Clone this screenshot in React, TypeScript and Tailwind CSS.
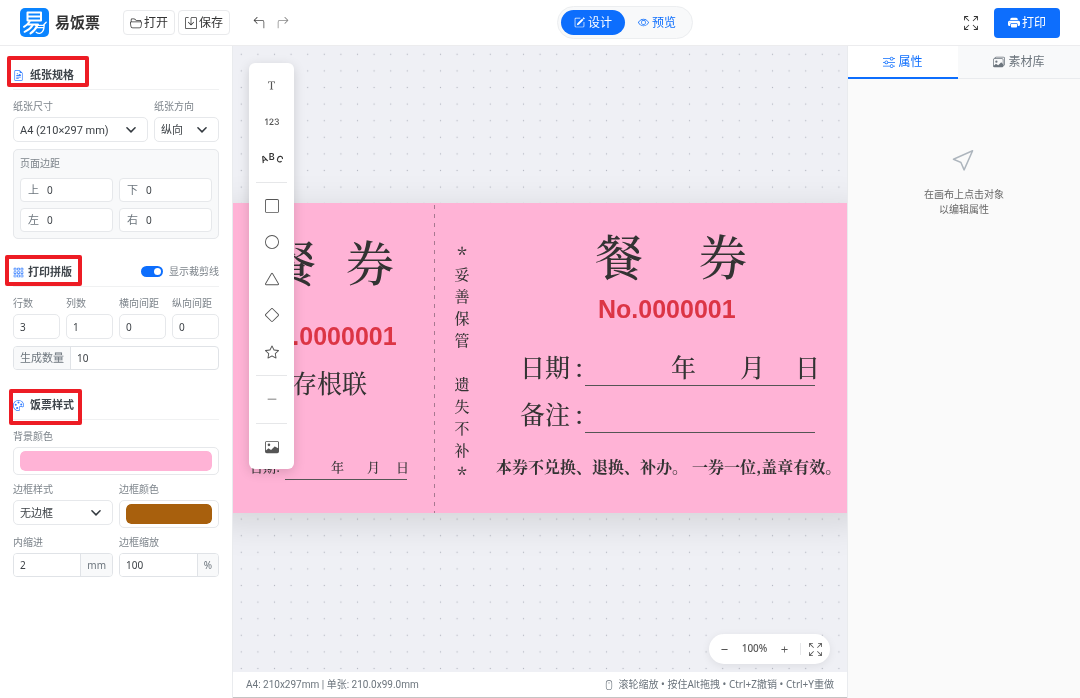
import type { ReactNode } from 'react';
import {
  Bs123,
  BsArrow90DegLeft,
  BsArrow90DegRight,
  BsArrowsFullscreen,
  BsCircle,
  BsCursor,
  BsDash,
  BsDashLg,
  BsDiamond,
  BsEye,
  BsFileEarmarkRichtext,
  BsFolder2Open,
  BsFonts,
  BsGrid3X3Gap,
  BsImage,
  BsImages,
  BsMouse,
  BsPalette,
  BsPencilSquare,
  BsPlus,
  BsPrinterFill,
  BsSave,
  BsSliders,
  BsSquare,
  BsStar,
  BsTriangle,
} from 'react-icons/bs';

const box = 'block w-full min-w-0 rounded-[5px] border border-[#e6e8eb] bg-white px-[6px] text-[#3c4146] outline-none';

function Logo() {
  return (
    <svg viewBox="0 0 29 29" className="size-[29px]" role="img" aria-label="易饭票">
      <rect width="29" height="29" rx="5" fill="#0a84ff" />
      <g fill="none" stroke="#fff" strokeWidth="2" strokeLinecap="round" strokeLinejoin="round">
        <path d="M7.500 4.500h13.500v8h-13.500zM7.500 8.500h13.500" />
        <path d="M9.600 13.400C8 16 6 17.600 4 18.800M8 16.400h10" />
        <path d="M12.800 17c-1.800 3-4.800 5.400-8.200 6.800M17.500 17c-1.400 3.400-4 6.400-7 8.400" />
      </g>
      <g fill="none" stroke="#fff" strokeWidth="1.300" strokeLinecap="round" strokeLinejoin="round">
        <path d="M15.500 17.300h8.700c-.1 4.400-1.500 7.500-4.400 8-1.400.2-2.600-.3-3.600-1.100M16 19.600h8M23.800 16.800l2.400-2.600" />
      </g>
    </svg>
  );
}

function ArcText() {
  return (
    <svg viewBox="0 0 26 18" className="h-[18px] w-[26px] overflow-visible" aria-hidden="true">
      <g fill="#333" fontFamily="Inter, sans-serif" fontSize="9" fontWeight="600" textAnchor="middle">
        <text transform="translate(6.500 13) rotate(-24)">A</text>
        <text transform="translate(12.800 11)">B</text>
        <text transform="translate(19.500 13) rotate(24)">C</text>
      </g>
    </svg>
  );
}

function Label({ htmlFor, children }: { htmlFor: string; children: ReactNode }) {
  return (
    <label htmlFor={htmlFor} className="mb-1 block h-[14px] text-[10px] leading-[14px] whitespace-nowrap text-[#7d848b]">
      {children}
    </label>
  );
}

function Field({ id, label, value }: { id: string; label: string; value: string }) {
  return (
    <div>
      <Label htmlFor={id}>{label}</Label>
      <input id={id} defaultValue={value} className={`${box} h-[25px] text-[10px]`} />
    </div>
  );
}

function Select({ id, label, value }: { id: string; label: string; value: string }) {
  return (
    <div>
      <Label htmlFor={id}>{label}</Label>
      <div className="relative">
        <select id={id} className={`${box} h-[25px] appearance-none pt-[3px] text-[11px] font-[Roboto,Noto_Sans_CJK_SC,sans-serif]`}>
          <option>{value}</option>
        </select>
        <svg
          viewBox="0 0 16 16"
          className="pointer-events-none absolute top-2 right-3 size-[10px]"
          fill="none"
          stroke="#343a40"
          strokeWidth="2.400"
          strokeLinecap="round"
          strokeLinejoin="round"
        >
          <path d="m1.500 4.500 6.500 6.500 6.500-6.500" />
        </svg>
      </div>
    </div>
  );
}

function Color({ id, label, swatch }: { id: string; label: string; swatch: string }) {
  return (
    <div>
      <Label htmlFor={id}>{label}</Label>
      <div className="h-7 rounded-[5px] border border-[#e6e8eb] px-[6px] py-[3px]">
        <input
          id={id}
          type="color"
          defaultValue={swatch}
          className="block h-5 w-full appearance-none rounded-[5px] bg-transparent p-0 [&::-webkit-color-swatch]:rounded-[5px] [&::-webkit-color-swatch]:border-0 [&::-webkit-color-swatch-wrapper]:p-0"
        />
      </div>
    </div>
  );
}

function Margin({ id, label }: { id: string; label: string }) {
  return (
    <div className="flex h-6 items-center rounded border border-[#e6e8eb] bg-white pl-[7px]">
      <label htmlFor={id} className="text-[11px] text-[#6c757d]">
        {label}
      </label>
      <input id={id} defaultValue="0" className="ml-2 w-full min-w-0 bg-transparent text-[10px] text-[#3c4146] outline-none" />
    </div>
  );
}

function UnitField({ id, label, value, unit }: { id: string; label: string; value: string; unit: string }) {
  return (
    <div>
      <Label htmlFor={id}>{label}</Label>
      <div className="flex h-6 overflow-hidden rounded border border-[#e0e3e7]">
        <input id={id} defaultValue={value} className="w-full min-w-0 bg-white px-[6px] text-[10px] text-[#3c4146] outline-none" />
        <span className="flex items-center border-l border-[#e0e3e7] bg-[#f8f9fa] px-[6px] text-[10px] text-[#6c757d]">{unit}</span>
      </div>
    </div>
  );
}

function Heading({ icon, mark, gap, children, extra }: { icon: ReactNode; mark: string; gap: string; children: ReactNode; extra?: ReactNode }) {
  return (
    <div className="relative mb-[9px] flex h-7 items-center justify-between border-b border-[#f0f1f2]">
      <h2 className={`flex items-center text-[11px] font-bold text-[#3f454b] ${gap}`}>
        <span className="text-[11px] text-[#2f7bff]">{icon}</span>
        {children}
      </h2>
      {extra}
      <span className={`pointer-events-none absolute rounded-[2px] border-4 border-[#ed1c24] ${mark}`} />
    </div>
  );
}

function Sidebar() {
  return (
    <aside className="w-[233px] shrink-0 border-r border-[#e9ebee] bg-white px-[13px] pt-4">
      <section>
        <Heading icon={<BsFileEarmarkRichtext />} gap="gap-[6px]" mark="-top-[6px] -left-[6px] h-[31px] w-[82px]">
          纸张规格
        </Heading>
        <div className="grid grid-cols-[135fr_65fr] gap-[6px]">
          <Select id="size" label="纸张尺寸" value="A4 (210×297 mm)" />
          <Select id="direction" label="纸张方向" value="纵向" />
        </div>
        <fieldset className="mt-[7px] rounded-[5px] border border-[#e6e8eb] bg-[#f8f9fa] p-[6px]">
          <legend className="float-left mb-2 h-[14px] w-full text-[10px] leading-[14px] text-[#7d848b]">页面边距</legend>
          <div className="clear-both grid grid-cols-2 gap-[6px]">
            <Margin id="top" label="上" />
            <Margin id="bottom" label="下" />
            <Margin id="left" label="左" />
            <Margin id="right" label="右" />
          </div>
        </fieldset>
      </section>

      <section className="mt-5">
        <Heading
          icon={<BsGrid3X3Gap />}
          gap="gap-1"
          mark="-top-1 -left-2 h-[31px] w-[77px]"
          extra={
            <label className="flex items-center gap-[6px] pb-[2px] text-[10px] text-[#7d848b]">
              <input
                type="checkbox"
                role="switch"
                defaultChecked
                className="h-[11px] w-[22px] appearance-none rounded-full bg-[#adb5bd] p-[2px] before:block before:size-[7px] before:rounded-full before:bg-white checked:bg-[#0d6efd] checked:before:ml-auto"
              />
              显示裁剪线
            </label>
          }
        >
          打印拼版
        </Heading>
        <div className="grid grid-cols-4 gap-[6px]">
          <Field id="rows" label="行数" value="3" />
          <Field id="cols" label="列数" value="1" />
          <Field id="gapx" label="横向间距" value="0" />
          <Field id="gapy" label="纵向间距" value="0" />
        </div>
        <div className="mt-[7px] flex h-6 overflow-hidden rounded border border-[#e0e3e7]">
          <label htmlFor="count" className="flex shrink-0 items-center border-r border-[#e0e3e7] bg-[#f8f9fa] px-[6px] text-[11px] text-[#6c757d]">
            生成数量
          </label>
          <input id="count" defaultValue="10" className="w-full min-w-0 px-[6px] text-[10px] text-[#3c4146] outline-none" />
        </div>
      </section>

      <section className="mt-[22px]">
        <Heading icon={<BsPalette />} gap="gap-[6px]" mark="-top-[3px] -left-1 h-9 w-[73px]">
          饭票样式
        </Heading>
        <Color id="background" label="背景颜色" swatch="#ffb3d6" />
        <div className="mt-[7px] grid grid-cols-2 gap-x-[6px] gap-y-[7px]">
          <Select id="borderStyle" label="边框样式" value="无边框" />
          <Color id="borderColor" label="边框颜色" swatch="#a8600d" />
          <UnitField id="inset" label="内缩进" value="2" unit="mm" />
          <UnitField id="scale" label="边框缩放" value="100" unit="%" />
        </div>
      </section>
    </aside>
  );
}

function Header() {
  return (
    <header className="flex h-[46px] shrink-0 items-center justify-between border-b border-[#ececee] bg-white px-5">
      <div className="flex items-center">
        <Logo />
        <h1 className="ml-[6px] text-[15px] font-bold text-[#333]">易饭票</h1>
        <button className="ml-[23px] flex h-[25px] items-center gap-[2px] rounded border border-[#e9eaec] px-[6px] text-[12px] text-[#333]">
          <BsFolder2Open className="size-3" />
          打开
        </button>
        <button className="ml-[3px] flex h-[25px] items-center gap-[2px] rounded border border-[#e9eaec] px-[6px] text-[12px] text-[#333]">
          <BsSave className="size-3" />
          保存
        </button>
        <button aria-label="撤销" className="ml-[22px] p-px text-[#444]">
          <BsArrow90DegLeft className="size-3" />
        </button>
        <button aria-label="重做" className="ml-[10px] p-px text-[#888]">
          <BsArrow90DegRight className="size-3" />
        </button>
      </div>

      <nav className="mr-1 flex items-center rounded-full border border-[#eceef0] bg-[#f8f9fa] p-[3px] text-[12px]">
        <button className="flex h-[25px] items-center gap-[3px] rounded-full bg-[#0d6efd] px-[13px] text-white">
          <BsPencilSquare className="size-[11px]" />
          设计
        </button>
        <button className="flex h-[25px] items-center gap-[3px] rounded-full px-[13px] text-[#0d6efd]">
          <BsEye className="size-[11px]" />
          预览
        </button>
      </nav>

      <div className="flex items-center gap-4">
        <button aria-label="全屏" className="text-[#333]">
          <BsArrowsFullscreen className="size-[14px]" />
        </button>
        <button className="flex h-[30px] items-center gap-[2px] rounded bg-[#0d6efd] px-[14px] text-[12px] text-white">
          <BsPrinterFill className="size-3" />
          打印
        </button>
      </div>
    </header>
  );
}

const tools: (null | { name: string; icon: ReactNode })[] = [
  { name: '文本', icon: <BsFonts className="size-[13px]" /> },
  { name: '编号', icon: <Bs123 /> },
  { name: '弧形文字', icon: <ArcText /> },
  null,
  { name: '矩形', icon: <BsSquare /> },
  { name: '圆形', icon: <BsCircle /> },
  { name: '三角形', icon: <BsTriangle /> },
  { name: '菱形', icon: <BsDiamond /> },
  { name: '星形', icon: <BsStar /> },
  null,
  { name: '线条', icon: <BsDashLg className="size-3" /> },
  null,
  { name: '图片', icon: <BsImage /> },
];

function Toolbar() {
  return (
    <div className="absolute top-[17px] left-4 flex h-[406px] w-[45px] flex-col rounded-md bg-white p-1 text-[14px] text-[#555] shadow-[0_3px_12px_rgba(0,0,0,0.15)]">
      {tools.map((tool, i) =>
        tool ? (
          <button key={i} aria-label={tool.name} className="flex flex-1 items-center justify-center">
            {tool.icon}
          </button>
        ) : (
          <hr key={i} className="mx-[3px] my-[5px] border-[#e6e7e9]" />
        ),
      )}
    </div>
  );
}

function Piece({ at, children }: { at: string; children?: ReactNode }) {
  return <span className={`absolute leading-none whitespace-pre ${at}`}>{children}</span>;
}

function Ticket() {
  return (
    <div className="relative h-[310px] w-[658px] shrink-0 bg-[#ffb3d6] font-[Noto_Serif_CJK_SC,Liberation_Serif,Noto_Sans_CJK_SC,serif] text-[#333] shadow-[0_8px_36px_rgba(0,0,0,0.13)]">
      <Piece at="top-[34px] left-[57px] text-[48px] font-medium">餐</Piece>
      <Piece at="top-[34px] left-[135px] text-[48px] font-medium">券</Piece>
      <Piece at="top-[121px] left-[48px] text-[25px] font-bold font-[Liberation_Sans,Arial,sans-serif] text-[#dc3545]">No.0000001</Piece>
      <Piece at="top-[167px] left-[81px] text-[25px] font-medium">存根联</Piece>
      <Piece at="top-[257px] left-[39px] text-[13px] font-medium">日期:</Piece>
      <Piece at="top-[257px] left-[120px] text-[13px] font-medium">年</Piece>
      <Piece at="top-[257px] left-[156px] text-[13px] font-medium">月</Piece>
      <Piece at="top-[257px] left-[185px] text-[13px] font-medium">日</Piece>
      <Piece at="top-[276px] left-[74px] h-px w-[122px] bg-[#555]" />

      <Piece at="top-[2px] left-[223px] h-[308px] w-px bg-[repeating-linear-gradient(180deg,#a87890_0_4px,transparent_4px_9px)]" />
      <div className="absolute top-[38px] left-[243px] flex w-4 flex-col items-center text-[15px] leading-[22px] font-medium">
        {Array.from('*妥善保管 遗失不补*').map((c, i) => (
          <span key={i} className={c === '*' ? 'h-[22px] pt-[3px] text-[20px]' : 'h-[22px] whitespace-pre'}>
            {c}
          </span>
        ))}
      </div>

      <Piece at="top-[28px] left-[384px] text-[48px] font-medium">餐</Piece>
      <Piece at="top-[28px] left-[488px] text-[48px] font-medium">券</Piece>
      <Piece at="top-[94px] left-[387px] text-[25px] font-bold font-[Liberation_Sans,Arial,sans-serif] text-[#dc3545]">No.0000001</Piece>
      <Piece at="top-[151px] left-[309px] text-[25px] font-medium">日期</Piece>
      <Piece at="top-[151px] left-[364px] text-[25px] font-medium">:</Piece>
      <Piece at="top-[151px] left-[460px] text-[25px] font-medium">年</Piece>
      <Piece at="top-[151px] left-[529px] text-[25px] font-medium">月</Piece>
      <Piece at="top-[151px] left-[584px] text-[25px] font-medium">日</Piece>
      <Piece at="top-[182px] left-[374px] h-px w-[230px] bg-[#555]" />
      <Piece at="top-[198px] left-[309px] text-[25px] font-medium">备注</Piece>
      <Piece at="top-[198px] left-[364px] text-[25px] font-medium">:</Piece>
      <Piece at="top-[229px] left-[374px] h-px w-[230px] bg-[#555]" />
      <Piece at="top-[256px] left-[285px] text-[16px] font-bold">本券不兑换、退换、补办。 一券一位,盖章有效。</Piece>
    </div>
  );
}

function Canvas() {
  return (
    <main className="flex min-w-0 flex-1 flex-col">
      <div className="relative flex flex-1 items-center justify-center overflow-hidden bg-[#eff0f5] pb-[2px]">
        <Ticket />
        <svg className="absolute inset-0 size-full mix-blend-multiply" aria-hidden="true">
          <defs>
            <pattern id="dots" width="16.600" height="16.600" patternUnits="userSpaceOnUse">
              <circle cx="8.300" cy="8.300" r="0.650" fill="#c3c6cc" />
            </pattern>
            <mask id="outside">
              <rect width="100%" height="100%" fill="#fff" />
              <rect y="157" width="100%" height="311" fill="#000" />
            </mask>
          </defs>
          <rect width="100%" height="100%" fill="url(#dots)" mask="url(#outside)" />
        </svg>
        <Toolbar />
        <div className="absolute right-[17px] bottom-2 flex h-[30px] items-center rounded-full bg-white px-2 text-[#555] shadow-[0_2px_8px_rgba(0,0,0,0.08)]">
          <button aria-label="缩小" className="p-px">
            <BsDash className="size-[13px]" />
          </button>
          <span className="w-[45px] pb-[2px] text-center text-[10px] font-medium">100%</span>
          <button aria-label="放大" className="p-px">
            <BsPlus className="size-[13px]" />
          </button>
          <span className="mx-2 h-3 w-px bg-[#e6e7e9]" />
          <button aria-label="适应窗口">
            <BsArrowsFullscreen className="size-[13px]" />
          </button>
        </div>
      </div>
      <footer className="flex h-[26px] shrink-0 items-center justify-between border-b border-[#c4c4c4] bg-white px-[13px] text-[10px] text-[#6c757d]">
        <span className="font-[Roboto,Noto_Sans_CJK_SC,sans-serif]">A4: 210x297mm | 单张: 210.0x99.0mm</span>
        <span className="flex items-center gap-1">
          <BsMouse />
          滚轮缩放 • 按住Alt拖拽 • Ctrl+Z撤销 • Ctrl+Y重做
        </span>
      </footer>
    </main>
  );
}

function Properties() {
  return (
    <aside className="w-[233px] shrink-0 border-l border-[#e9ebee] bg-[#fafafa]">
      <div className="flex h-[33px] text-[12px]">
        <button className="flex w-[110px] items-center justify-center gap-[3px] border-b-2 border-[#0d6efd] bg-white text-[#0d6efd]">
          <BsSliders className="size-3" />
          属性
        </button>
        <button className="flex flex-1 items-center justify-center gap-[3px] border-b border-[#e9ebee] bg-[#f8f9fa] text-[#6c757d]">
          <BsImages className="size-3" />
          素材库
        </button>
      </div>
      <div className="mt-[68px] flex flex-col items-center text-center text-[10px] leading-[15px] text-[#666]">
        <BsCursor className="mb-4 size-6 text-[#adb5bd]" />
        <p>
          在画布上点击对象
          <br />
          以编辑属性
        </p>
      </div>
    </aside>
  );
}

export default function App() {
  return (
    <div className="flex min-h-screen flex-col bg-white font-[Noto_Sans,Noto_Sans_CJK_SC,sans-serif]">
      <Header />
      <div className="flex flex-1">
        <Sidebar />
        <Canvas />
        <Properties />
      </div>
    </div>
  );
}
